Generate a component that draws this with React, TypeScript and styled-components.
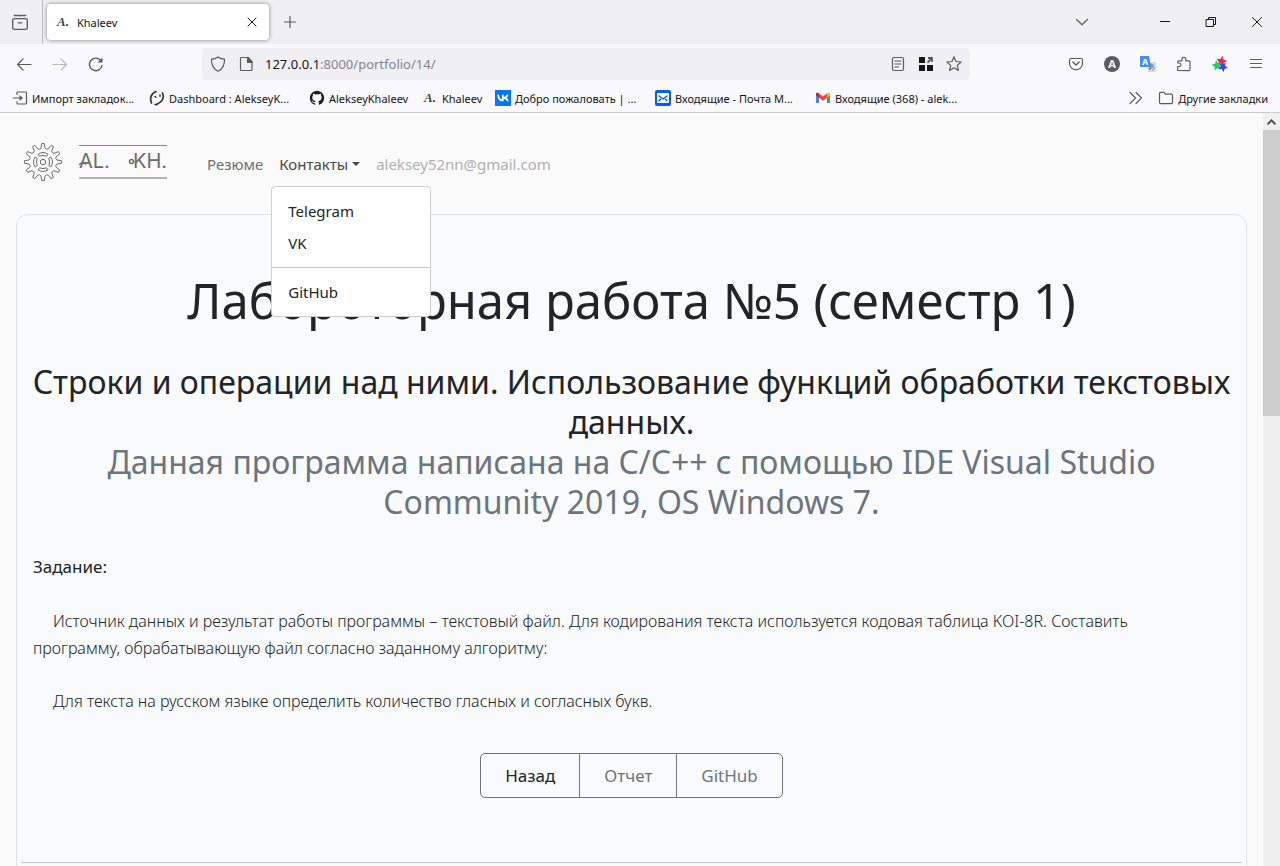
import React, { useState } from 'react';
import styled, { createGlobalStyle, css } from 'styled-components';

const GlobalStyle = createGlobalStyle`
  *, *::before, *::after { box-sizing: border-box; }
  body { margin: 0; }
  button, input { font: inherit; color: inherit; }
  a { color: inherit; text-decoration: none; }
`;

const Window = styled.div`
  display: flex;
  flex-direction: column;
  height: 100vh;
  overflow: hidden;
  background: #fafafa;
  font-family: 'Noto Sans', 'Open Sans', sans-serif;
  color: #212529;
`;

/* ---------- browser chrome ---------- */

const TabStrip = styled.div`
  display: flex;
  align-items: center;
  flex: none;
  height: 44px;
  background: #f0eff4;
  color: #5b5b66;
`;

const ViewCell = styled.div`
  display: flex;
  align-items: center;
  align-self: stretch;
  padding: 0 4px 0 2px;
  border-right: 1px solid #bdbcc2;
`;

const IconButton = styled.button<{ $wide?: boolean; $dim?: boolean; $dark?: boolean }>`
  display: flex;
  align-items: center;
  justify-content: center;
  flex: none;
  width: ${p => (p.$wide ? 46 : 36)}px;
  height: 32px;
  padding: 0;
  border: 0;
  background: none;
  color: ${p => (p.$dark ? '#15141a' : '#5b5b66')};
  opacity: ${p => (p.$dim ? 0.4 : 1)};
`;

const Tab = styled.div`
  display: flex;
  align-items: center;
  gap: 6px;
  width: 222px;
  height: 36px;
  margin: 0 3px 0 4px;
  padding: 0 0 0 10px;
  border-radius: 4px;
  background: #fff;
  box-shadow: 0 0 4px rgba(0, 0, 0, 0.45);
  font-size: 11px;
  color: #15141a;
`;

const TabTitle = styled.span`
  flex: 1;
`;

const CloseTab = styled(IconButton)`
  width: 34px;
`;

const Monogram = styled.span`
  width: 14px;
  font: italic 700 13px/16px 'Liberation Serif', serif;
  color: #444;
`;

const WindowControls = styled.div`
  display: flex;
  margin-left: auto;
`;

const ListTabs = styled(IconButton)`
  margin-right: 42px;
`;

const Toolbar = styled.div`
  display: flex;
  align-items: center;
  flex: none;
  height: 40px;
  padding: 0 6px;
  background: #f9f9fb;
`;

const UrlBar = styled.div`
  display: flex;
  align-items: center;
  flex: 1;
  height: 32px;
  margin: 0 88px;
  padding: 0 2px;
  border-radius: 4px;
  background: #f0f0f4;
`;

const UrlIcon = styled(IconButton)`
  width: 28px;
`;

const Address = styled.div`
  flex: 1;
  padding-left: 5px;
  font-size: 13px;
  line-height: 20px;
  color: #85848c;
`;

const Host = styled.span`
  color: #15141a;
`;

const Bookmarks = styled.nav`
  display: flex;
  align-items: center;
  flex: none;
  height: 29px;
  padding: 0 12px;
  border-bottom: 1px solid #ccc;
  background: #f9f9fb;
  font-size: 11px;
  color: #15141a;
  white-space: nowrap;
`;

const Bookmark = styled.a<{ $width?: number }>`
  display: flex;
  align-items: center;
  gap: 4px;
  width: ${p => (p.$width ? p.$width + 'px' : 'auto')};
`;

const More = styled(IconButton)`
  width: 28px;
  height: 28px;
  margin: 0 8px 0 auto;
`;

/* ---------- page ---------- */

const Viewport = styled.div`
  display: flex;
  flex: 1;
  min-height: 0;
`;

const Page = styled.div`
  flex: 1;
  min-width: 0;
  overflow: hidden;
`;

const ScrollTrack = styled.div`
  flex: none;
  width: 17px;
  background: #f0f0f0;
`;

const ScrollArrow = styled.div`
  display: flex;
  align-items: center;
  justify-content: center;
  height: 17px;
`;

const ScrollThumb = styled.div`
  height: 38%;
  background: #cdcdcd;
`;

const Header = styled.header`
  display: flex;
  gap: 32px;
  padding: 31px 16px 30px 23px;
`;

const Brand = styled.a`
  display: flex;
  align-items: center;
  gap: 16px;
  height: 36px;
`;

const Wordmark = styled.span`
  position: relative;
  display: flex;
  justify-content: space-between;
  width: 88px;
  border-top: 1px solid #858585;
  border-bottom: 2px solid #b5b5b5;
  font: 400 20px/31px Inter, sans-serif;
  color: #6c6c6c;
`;

const Swash = styled.svg`
  position: absolute;
  left: 0;
  top: 0;
`;

const Menu = styled.nav`
  display: flex;
  font-size: 15px;
  line-height: 24px;
`;

const navItem = css`
  display: flex;
  align-items: center;
  height: 40px;
  padding: 0 8px;
`;

const NavLink = styled.a<{ $muted?: boolean }>`
  ${navItem}
  color: ${p => (p.$muted ? '#b1b1b1' : '#707070')};
`;

const DropdownHost = styled.div`
  position: relative;
`;

const NavToggle = styled.button`
  ${navItem}
  gap: 4px;
  border: 0;
  background: none;
  color: #484848;
`;

const Caret = styled.span`
  border: 4px solid transparent;
  border-top-color: currentColor;
  border-bottom: 0;
`;

const Dropdown = styled.div`
  position: absolute;
  z-index: 1;
  top: 42px;
  left: 0;
  width: 160px;
  padding: 8px 0;
  border: 1px solid #cfcfcf;
  border-radius: 4px;
  background: #fff;
`;

const DropdownLink = styled.a`
  display: block;
  padding: 4px 16px;
  color: #212529;
`;

const Divider = styled.hr`
  height: 1px;
  margin: 8px 0;
  border: 0;
  background: #c8c8c8;
`;

const Card = styled.main`
  margin: 0 16px;
  padding: 55px 4px 48px;
  border: 1px solid #dee2e6;
  border-radius: 12px;
  background: #f8fafc;
`;

const Title = styled.h1`
  margin: 0 0 32px;
  font-size: 49px;
  font-weight: 400;
  line-height: 60px;
  text-align: center;
`;

const Subtitle = styled.h2`
  margin: 0 0 31px;
  font-size: 32px;
  font-weight: 400;
  line-height: 40px;
  text-align: center;
`;

const Muted = styled.small`
  display: block;
  font-size: 32px;
  color: #6c757d;
`;

const Task = styled.section`
  padding: 0 12px;
  line-height: 27px;
`;

const TaskLabel = styled.h3`
  margin: 0 0 28px;
  font-size: 17px;
  font-weight: 400;
  line-height: 27px;
`;

const Paragraph = styled.p`
  margin: 0 0 26px;
  font-size: 16px;
  font-weight: 300;
  text-indent: 20px;
`;

const Actions = styled.div`
  display: flex;
  justify-content: center;
  margin: 38px 0 64px;
`;

const ActionButton = styled.button<{ $current?: boolean }>`
  height: 45px;
  padding: 0 24px;
  border: 1px solid #6c757d;
  background: transparent;
  font-size: 17px;
  color: ${p => (p.$current ? '#212529' : '#6c757d')};
  & + & { margin-left: -1px; }
  &:first-child { border-radius: 5px 0 0 5px; }
  &:last-child { border-radius: 0 5px 5px 0; }
`;

const Rule = styled.hr`
  height: 1px;
  margin: 0;
  border: 0;
  background: #c3c5c8;
`;

/* ---------- icons ---------- */

const Icon = ({ children, size = 16 }: { children: React.ReactNode; size?: number }) => (
  <svg width={size} height={size} viewBox="0 0 16 16" fill="none" stroke="currentColor" strokeWidth="1.2" strokeLinecap="round" strokeLinejoin="round" aria-hidden="true">
    {children}
  </svg>
);

const polar = (r: number, deg: number) => {
  const a = (deg * Math.PI) / 180;
  return `${(20 + r * Math.sin(a)).toFixed(2)} ${(20 - r * Math.cos(a)).toFixed(2)}`;
};

const gearOutline =
  Array.from({ length: 12 }, (_, i) => {
    const a = i * 30;
    return `${i ? 'L' : 'M'}${polar(14.2, a - 8)}L${polar(18.6, a - 4)}L${polar(18.6, a + 4)}L${polar(14.2, a + 8)}Q${polar(12.4, a + 15)} ${polar(14.2, a + 22)}`;
  }).join('') + 'Z';

const Gear = () => (
  <svg width="40" height="40" viewBox="0 0 40 40" fill="none" stroke="#6c6c6c" strokeWidth="1" strokeLinejoin="round" aria-hidden="true">
    <path d={gearOutline} />
    <circle cx="20" cy="20" r="2.7" />
    {[0, 90, 180, 270].map(a => (
      <path key={a} transform={`rotate(${a} 20 20)`} d="M15 12.200Q20 8.800 25 12.200L23.600 14.200Q20 12.600 16.400 14.200Z" />
    ))}
  </svg>
);

const star = (cx: number, cy: number, r: number, rot = 0) =>
  'M' +
  Array.from({ length: 10 }, (_, i) => {
    const a = ((i * 36 + rot) * Math.PI) / 180;
    const q = i % 2 ? r * 0.46 : r;
    return `${(cx + q * Math.sin(a)).toFixed(2)} ${(cy - q * Math.cos(a)).toFixed(2)}`;
  }).join('L') +
  'Z';

const VkIcon = () => (
  <Icon>
    <path d="M0 0h16v16H0z" fill="#07f" stroke="none" />
    <path d="M3.2 5.4c.3 3.2 1.8 5 4.6 5V5.4M12.4 5.4c-.5 1.4-2 2.5-4.4 2.5 2.600 0 4 1 4.700 2.600" stroke="#fff" strokeWidth="1.8" />
  </Icon>
);

const MailIcon = () => (
  <Icon>
    <rect width="16" height="16" rx="2" fill="#005ff9" stroke="none" />
    <rect x="2" y="3" width="12" height="10" rx="1" fill="#fff" stroke="none" />
    <path d="M4 6l4 3 4-3M4 10.800l1.500-1.500M12 10.800l-1.500-1.500" stroke="#005ff9" strokeWidth="1.400" />
  </Icon>
);

const GmailIcon = () => (
  <Icon>
    <g stroke="none">
      <path d="M1 13h3V6.500L1 4.300z" fill="#4285f4" />
      <path d="M12 13h3V4.300l-3 2.200z" fill="#34a853" />
      <path d="M4 3.500l4 3 4-3v4.200l-4 3-4-3z" fill="#ea4335" />
      <path d="M1 4.300c0-1.700 1.700-1.900 3-.8v4.200L1 5.500z" fill="#c5221f" />
      <path d="M15 4.300c0-1.700-1.700-1.900-3-.8v4.200l3-2.200z" fill="#fbbc04" />
    </g>
  </Icon>
);

const GithubIcon = () => (
  <svg width="16" height="16" viewBox="0 0 16 16" fill="#1b1f23" aria-hidden="true">
    <path d="M8 .8a7.200 7.200 0 0 0-2.300 14c.4.1.5-.1.5-.3v-1.300c-2 .4-2.500-.9-2.500-.9-.3-.8-.8-1.100-.8-1.100-.7-.5 0-.4 0-.4.7 0 1.100.7 1.100.7.7 1.100 1.700.8 2.200.6 0-.5.2-.8.4-1-1.600-.2-3.300-.8-3.300-3.600 0-.8.3-1.400.7-1.900 0-.2-.3-.9.1-1.900 0 0 .6-.2 2 .7a7 7 0 0 1 3.700 0c1.400-.9 2-.7 2-.7.4 1 .1 1.700.1 1.900.5.5.7 1.100.7 1.900 0 2.800-1.700 3.400-3.300 3.600.3.200.5.7.5 1.400v2c0 .2.100.4.5.3A7.200 7.200 0 0 0 8 .8z" />
  </svg>
);

export default function App() {
  const [open, setOpen] = useState(true);
  return (
    <Window>
      <GlobalStyle />
      <TabStrip>
        <ViewCell>
          <IconButton aria-label="Обзор">
            <Icon size={18}><rect x="1.500" y="5" width="13" height="9.500" rx="1.500" /><path d="M3 2.200h10M6.500 8.800h3" /></Icon>
          </IconButton>
        </ViewCell>
        <Tab>
          <Monogram>A.</Monogram>
          <TabTitle>Khaleev</TabTitle>
          <CloseTab $dark aria-label="Закрыть вкладку"><Icon><path d="M4 4l8 8M12 4l-8 8" strokeWidth="1" /></Icon></CloseTab>
        </Tab>
        <IconButton aria-label="Новая вкладка"><Icon><path d="M8 2.500v11M2.500 8h11" /></Icon></IconButton>
        <WindowControls>
          <ListTabs aria-label="Список вкладок"><Icon><path d="M2.500 5.500L8 10.800l5.500-5.300" /></Icon></ListTabs>
          <IconButton $wide $dark aria-label="Свернуть"><Icon><path d="M3 7.500h10" strokeWidth="1" strokeLinecap="butt" /></Icon></IconButton>
          <IconButton $wide $dark aria-label="Восстановить"><Icon><path d="M3.500 5.500h7v7h-7zM5.500 5.500v-2h7v7h-2" strokeWidth="1" /></Icon></IconButton>
          <IconButton $wide $dark aria-label="Закрыть"><Icon><path d="M3.500 3.500l9 9M12.500 3.500l-9 9" strokeWidth="1" /></Icon></IconButton>
        </WindowControls>
      </TabStrip>

      <Toolbar>
        <IconButton aria-label="Назад"><Icon><path d="M15 8.500H1.500M7 3L1.500 8.500 7 14" /></Icon></IconButton>
        <IconButton $dim aria-label="Вперёд"><Icon><path d="M1 8.500h13.500M9 3l5.500 5.500L9 14" /></Icon></IconButton>
        <IconButton aria-label="Обновить"><Icon><path d="M14 9.500a6.300 6.300 0 1 1-1.500-5.300" strokeWidth="1.400" /><path d="M14.500 1.500v5h-5z" fill="currentColor" stroke="none" /></Icon></IconButton>
        <UrlBar>
          <UrlIcon aria-label="Защита"><Icon><path d="M8 1C6 2.500 4 3.100 1.500 3.200 1.300 9 3.500 13 8 15.200 12.500 13 14.700 9 14.500 3.200 12 3.100 10 2.500 8 1z" /></Icon></UrlIcon>
          <UrlIcon aria-label="Сведения о сайте"><Icon><path d="M3.500 1.500H10l4 4v8a1 1 0 0 1-1 1H3.500a1 1 0 0 1-1-1v-11a1 1 0 0 1 1-1z" /><path d="M9.500 1.500v5H14z" fill="currentColor" /></Icon></UrlIcon>
          <Address><Host>127.0.0.1</Host>:8000/portfolio/14/</Address>
          <UrlIcon aria-label="Режим чтения"><Icon><rect x="2.500" y="1.500" width="11" height="13" rx="1.500" /><path d="M5 5h6M5 8h6M5 11h3.500" /></Icon></UrlIcon>
          <UrlIcon $dark aria-label="Приложения"><Icon><path d="M1 1h6v6H1zM1 9h6v6H1zM9 9h6v6H9z" fill="currentColor" stroke="none" /><path d="M9.500 6.500l4-4M10 2h4v4" stroke="#5b5b66" strokeWidth="1.800" strokeLinecap="butt" strokeLinejoin="miter" /></Icon></UrlIcon>
          <UrlIcon aria-label="Добавить в закладки"><Icon><path d={star(8, 8.300, 7.500)} /></Icon></UrlIcon>
        </UrlBar>
        <IconButton aria-label="Pocket"><Icon><path d="M2.800 2.500h10.400c.8 0 1.300.5 1.300 1.300v3.500a6.500 6.500 0 0 1-13 0V3.800c0-.8.5-1.300 1.300-1.300z" /><path d="M4.800 6L8 9l3.200-3" strokeWidth="1.400" /></Icon></IconButton>
        <IconButton aria-label="Аккаунт">
          <Icon><circle cx="8" cy="8" r="8" fill="currentColor" stroke="none" /><text x="8" y="12" textAnchor="middle" fontSize="11" fontWeight="700" fontFamily="Open Sans, sans-serif" fill="#fff" stroke="none">A</text></Icon>
        </IconButton>
        <IconButton aria-label="Переводчик">
          <Icon><path d="M7 6h9v10H8z" fill="#dcdce0" stroke="none" /><path d="M0 0h9l2 11H0z" fill="#4a8af4" stroke="none" /><text x="5" y="9" textAnchor="middle" fontSize="9" fontWeight="700" fontFamily="Open Sans, sans-serif" fill="#fff" stroke="none">A</text><path d="M8.500 9h5M11 7.500c0 3-.3 4.500-1 6.200M13 9.500c-1 3-3 4.500-4 3.500s2-3 4-2.300 1.500 3-.5 3.500" stroke="#6d8296" strokeWidth="1" /></Icon>
        </IconButton>
        <IconButton aria-label="Расширения"><Icon><path d="M1.700 14.500v-4h1.500a1.500 1.500 0 0 0 0-3.500H1.700V6a1.200 1.200 0 0 1 1.200-1.200H6V3.200a1.900 1.900 0 0 1 3.800 0v1.600h3a1.200 1.200 0 0 1 1.200 1.200v7.500a1.200 1.200 0 0 1-1.200 1.200z" /></Icon></IconButton>
        <IconButton aria-label="Звёзды"><Icon><g stroke="none"><path d={star(9.500, 5.500, 5.800, 10)} fill="#f5274e" /><path d={star(5, 9.500, 5.600, -10)} fill="#17d366" /><path d={star(11, 11, 5.200, 30)} fill="#2a4be8" /></g></Icon></IconButton>
        <IconButton aria-label="Меню"><Icon><path d="M2.500 3.500h11M2.500 7.500h11M2.500 11.500h11" /></Icon></IconButton>
      </Toolbar>

      <Bookmarks aria-label="Закладки">
        <Bookmark href="#" $width={137}><Icon><path d="M5 4.500V3a1 1 0 0 1 1-1h7.500a1 1 0 0 1 1 1v10a1 1 0 0 1-1 1H6a1 1 0 0 1-1-1v-1.500M1 8h8" stroke="#5b5b66" /><path d="M7.500 5l3.500 3-3.500 3z" fill="#5b5b66" stroke="none" /></Icon>Импорт закладок...</Bookmark>
        <Bookmark href="#" $width={160}><Icon><path d="M7 1.500C2 3.500 .5 8 2.500 13M13.500 3c2 5-.5 9-6 11.500" stroke="#333" strokeWidth="1.700" /><path d="M6 6.500l.8.800M11 5v1.300M6 14.500h2" stroke="#333" strokeWidth="1.500" /></Icon>Dashboard : AlekseyK...</Bookmark>
        <Bookmark href="#" $width={115}><GithubIcon />AlekseyKhaleev</Bookmark>
        <Bookmark href="#" $width={71}><Monogram>A.</Monogram>Khaleev</Bookmark>
        <Bookmark href="#" $width={160}><VkIcon />Добро пожаловать | ...</Bookmark>
        <Bookmark href="#" $width={160}><MailIcon />Входящие - Почта M...</Bookmark>
        <Bookmark href="#" $width={160}><GmailIcon />Входящие (368) - alek...</Bookmark>
        <More aria-label="Ещё закладки"><Icon><path d="M2 2.500L7.500 8 2 13.500M8 2.500L13.500 8 8 13.500" /></Icon></More>
        <Bookmark href="#"><Icon><path d="M1.500 12.500v-9A1.200 1.200 0 0 1 2.700 2.300H6l1.500 1.900h5.800a1.200 1.200 0 0 1 1.200 1.200v7.100a1.200 1.200 0 0 1-1.200 1.200H2.700a1.200 1.200 0 0 1-1.200-1.200z" stroke="#5b5b66" /></Icon>Другие закладки</Bookmark>
      </Bookmarks>

      <Viewport>
        <Page>
          <Header>
            <Brand href="#">
              <Gear />
              <Wordmark>
                <span>AL.</span>
                <span>KH.</span>
                <Swash width="88" height="31" viewBox="0 0 88 31" fill="none" stroke="#6c6c6c" strokeWidth="1.500" strokeLinecap="round" aria-hidden="true">
                  <path d="M.5 18.500c1.500-2 4-2 6-.5" />
                  <circle cx="52.500" cy="15.500" r="2" />
                </Swash>
              </Wordmark>
            </Brand>
            <Menu>
              <NavLink href="#">Резюме</NavLink>
              <DropdownHost>
                <NavToggle aria-expanded={open} onClick={() => setOpen(!open)}>Контакты<Caret /></NavToggle>
                {open && (
                  <Dropdown>
                    <DropdownLink href="#">Telegram</DropdownLink>
                    <DropdownLink href="#">VK</DropdownLink>
                    <Divider />
                    <DropdownLink href="#">GitHub</DropdownLink>
                  </Dropdown>
                )}
              </DropdownHost>
              <NavLink href="#" $muted>aleksey52nn@gmail.com</NavLink>
            </Menu>
          </Header>
          <Card>
            <Title>Лабороторная работа №5 (семестр 1)</Title>
            <Subtitle>
              Строки и операции над ними. Использование функций обработки текстовых данных.
              <Muted>Данная программа написана на C/C++ с помощью IDE Visual Studio<br />Community 2019, OS Windows 7.</Muted>
            </Subtitle>
            <Task>
              <TaskLabel>Задание:</TaskLabel>
              <Paragraph>
                Источник данных и результат работы программы – текстовый файл. Для кодирования текста используется кодовая таблица KOI-8R. Составить<br />
                программу, обрабатывающую файл согласно заданному алгоритму:
              </Paragraph>
              <Paragraph>Для текста на русском языке определить количество гласных и согласных букв.</Paragraph>
            </Task>
            <Actions>
              <ActionButton $current>Назад</ActionButton>
              <ActionButton>Отчет</ActionButton>
              <ActionButton>GitHub</ActionButton>
            </Actions>
            <Rule />
          </Card>
        </Page>
        <ScrollTrack>
          <ScrollArrow>
            <svg width="9" height="6" viewBox="0 0 9 6" fill="none" stroke="#505050" strokeWidth="2" aria-hidden="true"><path d="M.5 5.300l4-4 4 4" /></svg>
          </ScrollArrow>
          <ScrollThumb />
        </ScrollTrack>
      </Viewport>
    </Window>
  );
}
